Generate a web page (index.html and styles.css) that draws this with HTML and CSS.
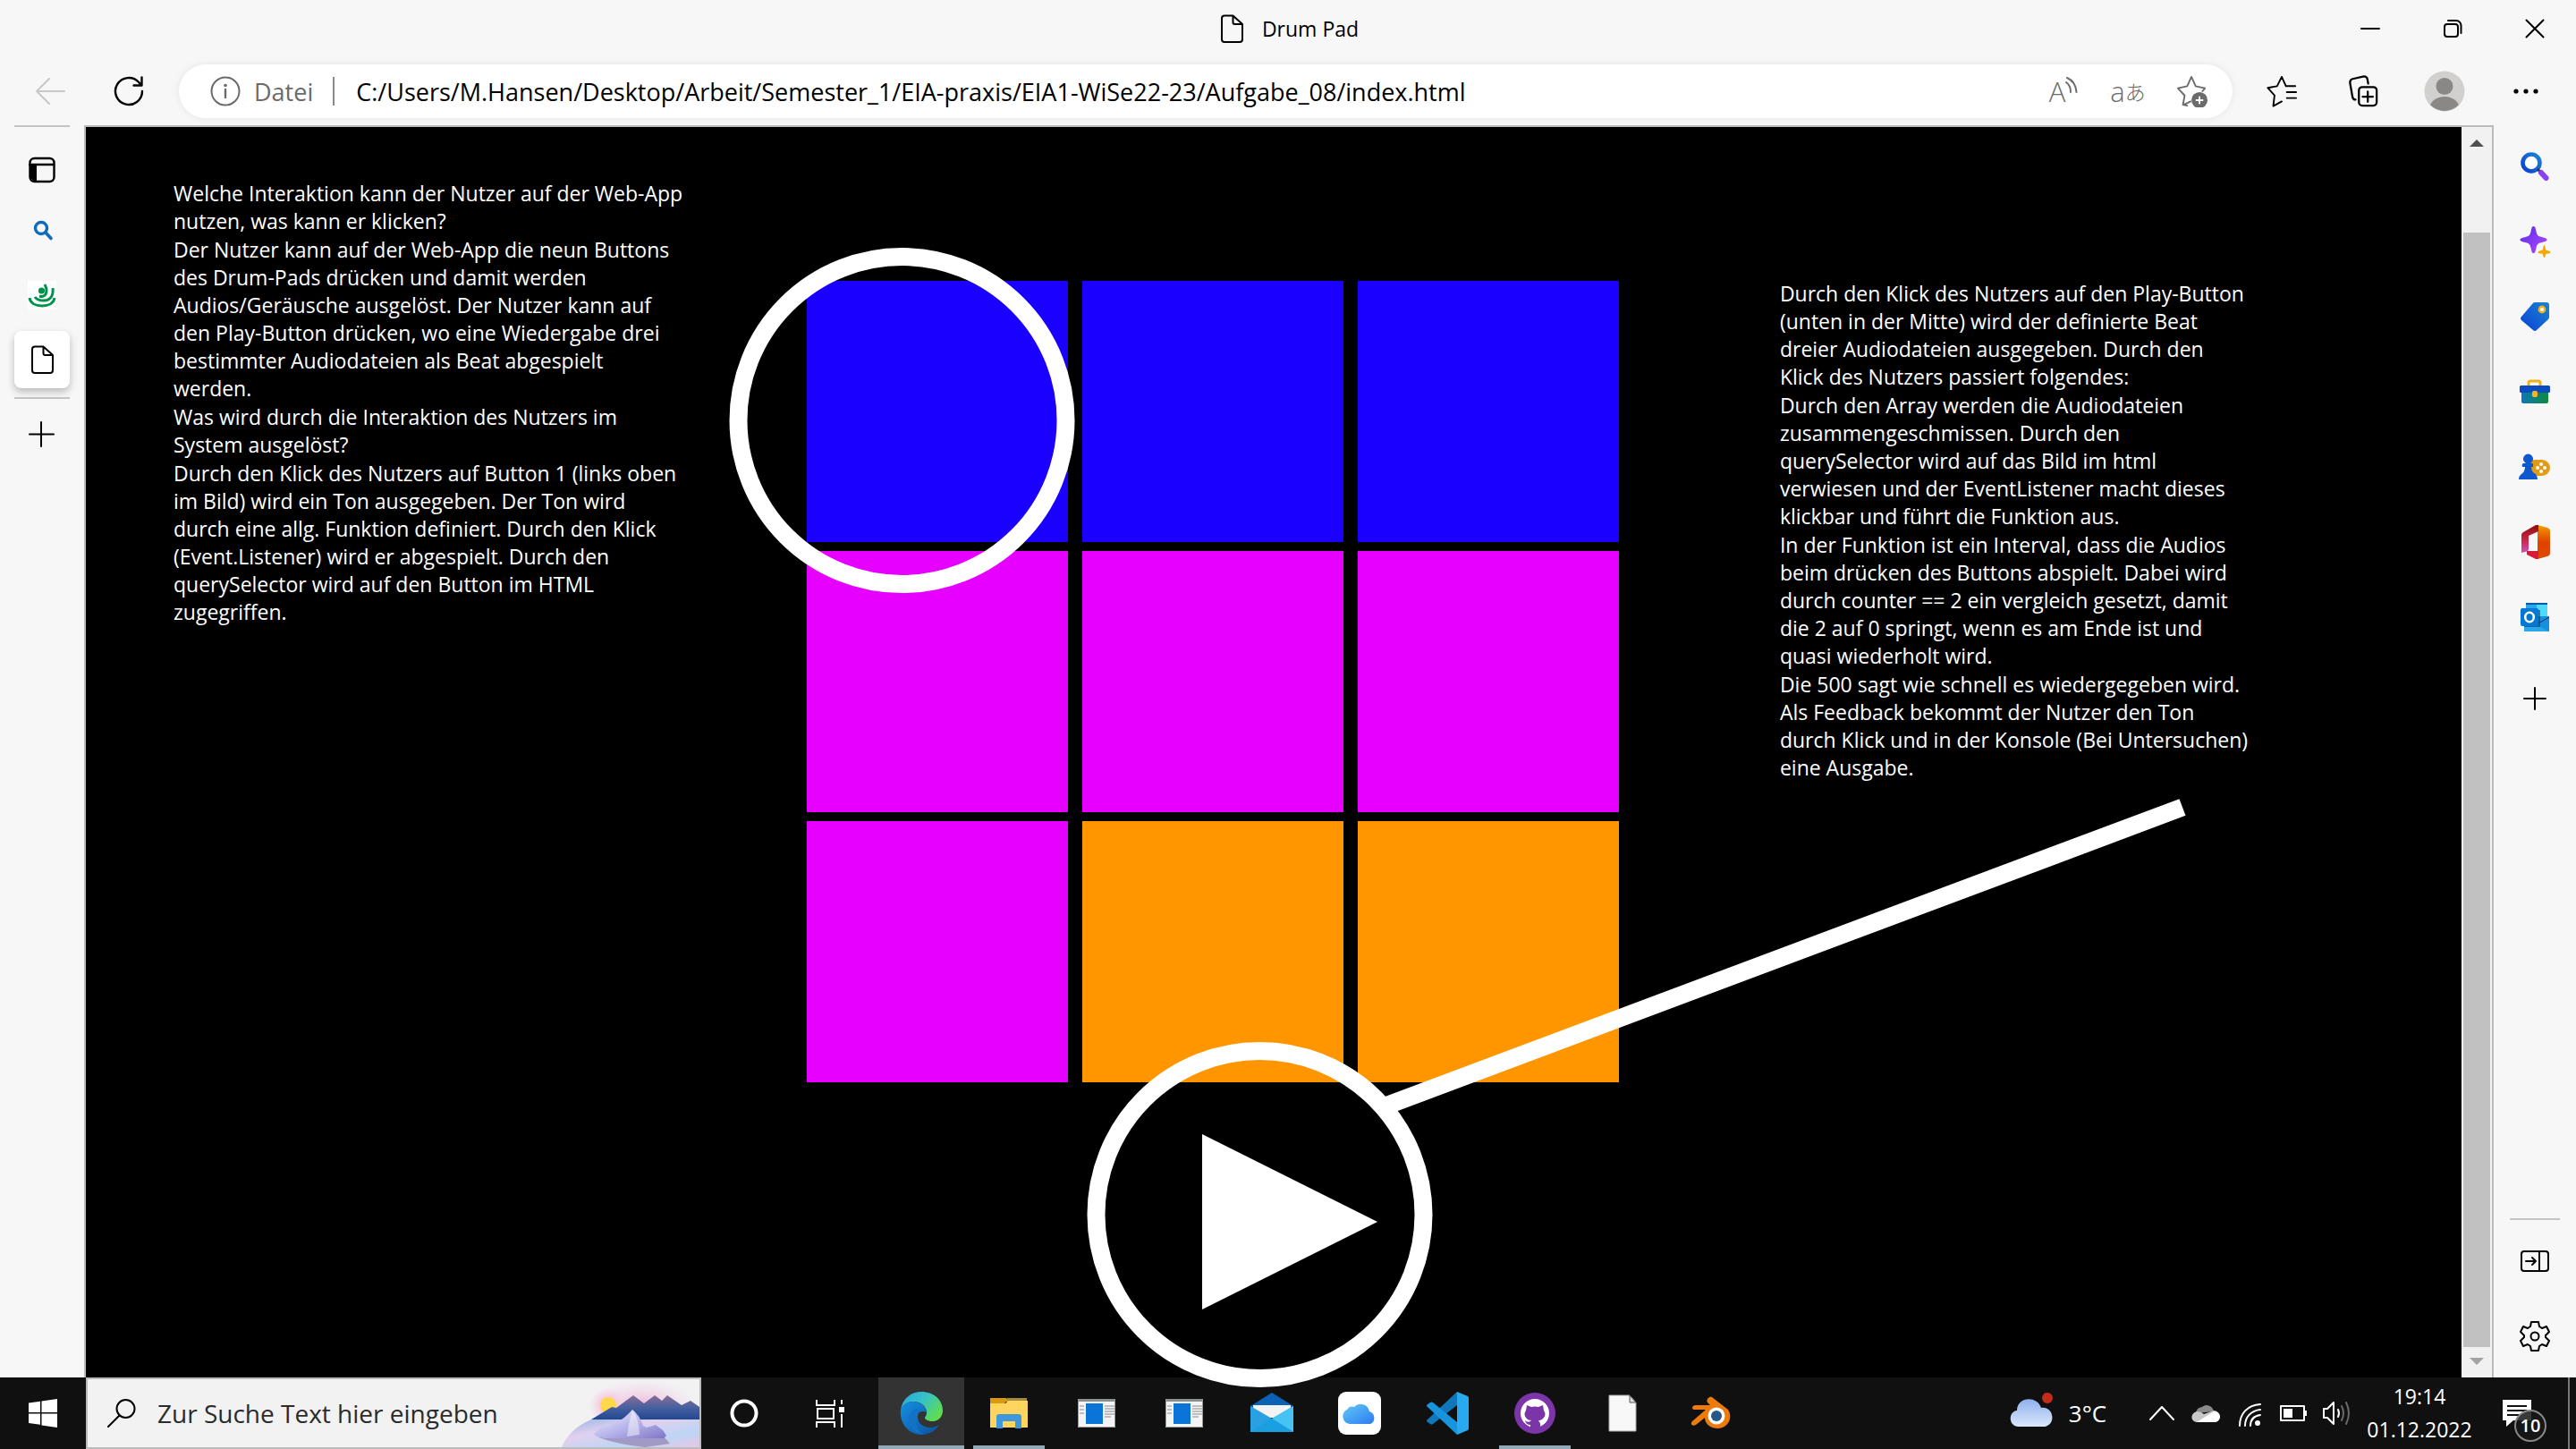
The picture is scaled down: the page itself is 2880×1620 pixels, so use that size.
FILE: index.html
```html
<!DOCTYPE html>
<html lang="de">
<head>
<meta charset="utf-8">
<title>Drum Pad</title>
<link rel="stylesheet" href="styles.css">
</head>
<body>
<header class="titlebar">
  <div class="tab-title">
    <svg class="i32" viewBox="0 0 32 32"><path class="ln" d="M9 1.500h8.500L28 11v17a3 3 0 0 1-3 3H8a3 3 0 0 1-3-3V4.500a3 3 0 0 1 3-3zM17.500 1.500V9a2 2 0 0 0 2 2H28"/></svg>
    <span>Drum Pad</span>
  </div>
  <div class="window-buttons">
    <button aria-label="Minimieren"><svg class="i32" viewBox="0 0 32 32"><path class="ln" d="M6 16h20"/></svg></button>
    <button aria-label="Verkleinern"><svg class="i32" viewBox="0 0 32 32"><rect class="ln" x="7" y="11" width="15" height="14" rx="3"/><path class="ln" d="M11 7h9a5.500 5.500 0 0 1 5.500 5.500V21"/></svg></button>
    <button aria-label="Schließen"><svg class="i32" viewBox="0 0 32 32"><path class="ln" d="M6.500 6.500l19 19M25.500 6.500l-19 19"/></svg></button>
  </div>
</header>

<div class="toolbar">
  <div class="nav-buttons">
    <button aria-label="Zurück" disabled><svg class="i36" viewBox="0 0 36 36"><path class="ln faint" d="M34 18H3M17 4L3 18l14 14"/></svg></button>
    <button aria-label="Aktualisieren"><svg class="i36" viewBox="0 0 36 36"><path class="ln bold" d="M33 18a15 15 0 1 1-4-10.200l3 3.400M32.500 2.500v9h-9"/></svg></button>
  </div>
  <div class="address">
    <svg class="i36" viewBox="0 0 36 36"><circle class="ln gray" cx="18" cy="18" r="15.500"/><path class="ln gray bold" d="M18 16v9"/><circle cx="18" cy="11.500" r="1.800" fill="#6b6b6b"/></svg>
    <label class="scheme" for="url">Datei</label>
    <span class="divider"></span>
    <input id="url" class="url" type="text" value="C:/Users/M.Hansen/Desktop/Arbeit/Semester_1/EIA-praxis/EIA1-WiSe22-23/Aufgabe_08/index.html">
    <div class="address-actions">
      <button class="read" aria-label="Laut vorlesen">A<svg viewBox="0 0 14 24"><path class="ln gray" d="M1 6c3 2 5 6 5 11M2 1c7 3 10 9 10.500 16"/></svg></button>
      <button class="translate" aria-label="Übersetzen">a<span>あ</span></button>
      <button aria-label="Zu Favoriten"><svg class="i36" viewBox="0 0 36 38"><path class="ln gray" d="M12 36l-5-1 2-11-8-8.500L12 13 17 2l5 11 11 2.500-3 3.500M8 35l8-4"/><circle cx="26.500" cy="29.500" r="9.500" fill="#6b6b6b"/><path d="M26.500 25v9M22 29.500h9" stroke="#fff" stroke-width="2"/></svg></button>
    </div>
  </div>
  <div class="tool-actions">
    <button aria-label="Favoriten"><svg class="i36" viewBox="0 0 36 38"><path class="ln" d="M18 31l-10 5.500 1.500-12.500-8-9 11-2L18 2l5 11h11M24 20h11M24 27h11"/></svg></button>
    <button aria-label="Sammlungen"><svg class="i36" viewBox="0 0 36 38"><rect class="ln bold" x="13" y="14" width="21" height="22" rx="4"/><path class="ln bold" d="M23.500 19.500v12M17.500 25.500h12M9 29c-2 0-3-1-3.500-3L2.500 9c0-2 1-4 3-4.500L19 1.500c2 0 3.500 1 4 3L24 10"/></svg></button>
    <button aria-label="Profil"><svg class="i46" viewBox="0 0 46 46"><clipPath id="av"><circle cx="23" cy="23" r="22"/></clipPath><circle cx="23" cy="23" r="22.500" fill="#d2d0ce"/><g clip-path="url(#av)" fill="#8a8886"><circle cx="23" cy="17.500" r="9.500"/><ellipse cx="23" cy="42" rx="16.500" ry="13"/></g></svg></button>
    <button aria-label="Mehr"><svg class="i36" viewBox="0 0 36 36"><g><circle cx="7" cy="18" r="2.600"/><circle cx="18" cy="18" r="2.600"/><circle cx="29" cy="18" r="2.600"/></g></svg></button>
  </div>
</div>

<div class="workspace">
  <nav class="tabs">
    <hr>
    <button class="tab-menu" aria-label="Tabmenü"><svg class="i32" viewBox="0 0 32 32"><rect class="ln bold" x="2.500" y="3" width="27" height="26" rx="5"/><path class="ln bold" d="M2 10h27"/><path d="M3 9h7v19H6l-3-3z"/></svg></button>
    <button aria-label="Suche"><svg class="i32" viewBox="0 0 32 32"><circle cx="15" cy="13" r="6.500" fill="none" stroke="#0f6cbd" stroke-width="3.400"/><path d="M20 18l6 6.500" stroke="#0f6cbd" stroke-width="3.600" stroke-linecap="round"/></svg></button>
    <button aria-label="Hochschule"><svg class="i32" viewBox="0 0 32 32"><path fill="#fff" d="M0 0h32v32H0z"/><circle cx="15.500" cy="11" r="3.600" fill="#00924c"/><g fill="none" stroke="#00924c" stroke-width="3"><path d="M19 4c2 4 3 8 1 11s-4 3-7 2"/><path d="M28 8c1 9-3 14-10 14-5 0-8-1-10-4"/><path d="M2 19c1 6 7 9 14 9s13-3 14-9"/></g></svg></button>
    <button class="active" aria-label="Drum Pad"><svg class="i32" viewBox="0 0 32 32"><path class="ln" d="M8 1.500h9.500L28 11v17a3 3 0 0 1-3 3H8a3 3 0 0 1-3-3V4.500a3 3 0 0 1 3-3zM17.500 1.500V9a2 2 0 0 0 2 2H28"/></svg></button>
    <hr class="low">
    <button aria-label="Neuer Tab"><svg class="i32" viewBox="0 0 32 32"><path class="ln" d="M15 2v27M2 15.500h27"/></svg></button>
  </nav>

  <main class="page">
    <section class="note note-left">
      <p>Welche Interaktion kann der Nutzer auf der Web-App<br>nutzen, was kann er klicken?</p>
      <p>Der Nutzer kann auf der Web-App die neun Buttons<br>des Drum-Pads drücken und damit werden<br>Audios/Geräusche ausgelöst. Der Nutzer kann auf<br>den Play-Button drücken, wo eine Wiedergabe drei<br>bestimmter Audiodateien als Beat abgespielt<br>werden.</p>
      <p>Was wird durch die Interaktion des Nutzers im<br>System ausgelöst?</p>
      <p>Durch den Klick des Nutzers auf Button 1 (links oben<br>im Bild) wird ein Ton ausgegeben. Der Ton wird<br>durch eine allg. Funktion definiert. Durch den Klick<br>(Event.Listener) wird er abgespielt. Durch den<br>querySelector wird auf den Button im HTML<br>zugegriffen.</p>
    </section>
    <section class="drum">
      <div class="pads">
        <button class="pad blue" aria-label="Pad 1"></button><button class="pad blue" aria-label="Pad 2"></button><button class="pad blue" aria-label="Pad 3"></button>
        <button class="pad pink" aria-label="Pad 4"></button><button class="pad pink" aria-label="Pad 5"></button><button class="pad pink" aria-label="Pad 6"></button>
        <button class="pad pink" aria-label="Pad 7"></button><button class="pad orange" aria-label="Pad 8"></button><button class="pad orange" aria-label="Pad 9"></button>
      </div>
      <button class="play" aria-label="Play"><svg viewBox="0 0 196 196"><path d="M0 0l196 98L0 196z" fill="#fff"/></svg></button>
      <svg class="marks" viewBox="0 0 908 1240"><circle cx="106.500" cy="156" r="183"/><circle cx="506.500" cy="1044" r="183"/><path d="M646 922.800L1538 588.500"/></svg>
    </section>
    <section class="note note-right">
      <p>Durch den Klick des Nutzers auf den Play-Button<br>(unten in der Mitte) wird der definierte Beat<br>dreier Audiodateien ausgegeben. Durch den<br>Klick des Nutzers passiert folgendes:</p>
      <p>Durch den Array werden die Audiodateien<br>zusammengeschmissen. Durch den<br>querySelector wird auf das Bild im html<br>verwiesen und der EventListener macht dieses<br>klickbar und führt die Funktion aus.</p>
      <p>In der Funktion ist ein Interval, dass die Audios<br>beim drücken des Buttons abspielt. Dabei wird<br>durch counter == 2 ein vergleich gesetzt, damit<br>die 2 auf 0 springt, wenn es am Ende ist und<br>quasi wiederholt wird.</p>
      <p>Die 500 sagt wie schnell es wiedergegeben wird.<br>Als Feedback bekommt der Nutzer den Ton<br>durch Klick und in der Konsole (Bei Untersuchen)<br>eine Ausgabe.</p>
    </section>
  </main>

  <div class="scrollbar">
    <svg viewBox="0 0 34 34"><path d="M9 22h16l-8-8z" fill="#505050"/></svg>
    <div class="thumb"></div>
    <svg viewBox="0 0 34 34"><path d="M9 12h16l-8 8z" fill="#a3a3a3"/></svg>
  </div>

  <aside class="sidebar">
    <svg width="0" height="0" class="defs"><defs>
      <linearGradient id="gBlue" x1="0" y1="1" x2="1" y2="0"><stop offset="0" stop-color="#0a3fd6"/><stop offset="1" stop-color="#1a86d0"/></linearGradient>
      <linearGradient id="gPurple" x1="0" y1="0" x2="1" y2="1"><stop offset="0" stop-color="#5a2be8"/><stop offset="1" stop-color="#b04bff"/></linearGradient>
      <linearGradient id="gGreen" x1="0" y1="0" x2="1" y2="0"><stop offset="0" stop-color="#0b78b8"/><stop offset="1" stop-color="#0f8a3c"/></linearGradient>
      <linearGradient id="gOff" x1="0" y1="0" x2="0" y2="1"><stop offset="0" stop-color="#f59a00"/><stop offset=".5" stop-color="#de4300"/><stop offset="1" stop-color="#e04a00"/></linearGradient>
      <linearGradient id="gOff2" x1="0" y1="0" x2="0" y2="1"><stop offset="0" stop-color="#8a1010"/><stop offset=".5" stop-color="#cc2040"/><stop offset="1" stop-color="#d050b8"/></linearGradient>
    </defs></svg>
    <button aria-label="Suchen"><svg class="i36" viewBox="0 0 36 36"><circle cx="14" cy="14" r="9.500" fill="#fff" stroke="url(#gBlue)" stroke-width="4.600"/><path d="M21 21l3 3" stroke="#333" stroke-width="3"/><path d="M25 25l5.500 6" stroke="#8a3ff0" stroke-width="6" stroke-linecap="round"/></svg></button>
    <button aria-label="Entdecken"><svg class="i36" viewBox="0 0 36 36"><path d="M16.500 1c1.500 0 2 1 3 6 1 4 2 5 6 6 5 1 6 2 6 3s-1 2-6 3c-4 1-5 2-6 6-1 5-1.500 6-3 6s-2-1-3-6c-1-4-2-5-6-6-5-1-6-2-6-3s1-2 6-3c4-1 5-2 6-6 1-5 1.500-6 3-6z" fill="url(#gPurple)"/><path d="M28.500 22c1 0 1.500 5 2 5.500s5 1 5 2.500-4.500 1.500-5 2-1 4-2 4-1.500-3.500-2-4-5-.5-5-2 4.500-2 5-2.500 1-5.500 2-5.500z" fill="#f2a900"/></svg></button>
    <button aria-label="Shopping"><svg class="i36" viewBox="0 0 36 36"><path d="M18 2h13q3 0 3 3v13q0 2-1 3L20 33q-2 2-4 0L3 22q-2-2 0-4L15 4q1-2 3-2z" fill="url(#gBlue)"/><circle cx="26" cy="10" r="3.200" fill="#fff" stroke="#f2b01e" stroke-width="2.400"/></svg></button>
    <button aria-label="Tools"><svg class="i36" viewBox="0 0 36 36"><path d="M11 11V8q0-2 2-2h9q2 0 2 2v3" fill="none" stroke="#f0ae1c" stroke-width="3"/><path d="M3 16h30v13q0 2-2 2H5q-2 0-2-2z" fill="url(#gGreen)"/><rect x="1" y="11" width="34" height="8" rx="1.500" fill="#0c4ac4"/><rect x="15" y="17" width="6" height="7" rx="2" fill="#f6b51e"/></svg></button>
    <button aria-label="Spiele"><svg class="i36" viewBox="0 0 36 36"><rect x="9" y="10" width="26" height="18" rx="9" fill="#e59a14"/><g fill="#fff"><circle cx="25" cy="15" r="2"/><circle cx="25" cy="23" r="2"/><circle cx="21" cy="19" r="2"/><circle cx="29" cy="19" r="2"/></g><path d="M5 14h3a5.500 5.500 0 1 1 5 0h3v4h-2q0 6 5 8 2 3 2 6H0q0-4 3-6 4-3 4-8H4q-1-3 1-4z" fill="#0d58cf"/></svg></button>
    <button aria-label="Office"><svg class="i40" viewBox="0 0 36 40"><path d="M21 1l11 3q3 1 3 4v24q0 3-3 4l-11 3z" fill="url(#gOff)"/><path d="M22 1v7L11 13v15q0 2-4 3l-4 1V12q0-2 2-3L19 1z" fill="url(#gOff2)"/><path d="M9 30h13v9h-3L9 34z" fill="#d81b3a"/></svg></button>
    <button aria-label="Outlook"><svg class="i36" viewBox="0 0 36 36"><path d="M8 2h24v16H8z" fill="#28a8ea"/><path d="M20 2h12v16H20z" fill="#50d9ff"/><path d="M8 2h24v2H8z" fill="#0358a7"/><path d="M6 17h28v17H6z" fill="#1490df"/><path d="M6 20l28 14H6z" fill="#28a8ea"/><path d="M20 26l14-8" stroke="#0a2767"/><path d="M6 10h18v19H6z" fill="#123b6d" opacity=".6"/><rect x="2" y="8" width="20" height="20" rx="2" fill="#0078d4"/><ellipse cx="12" cy="18" rx="4.800" ry="5.200" fill="none" stroke="#fff" stroke-width="2.600"/></svg></button>
    <button aria-label="Hinzufügen"><svg class="i32" viewBox="0 0 32 32"><path class="ln" d="M16 4v24M4 16h24"/></svg></button>
    <div class="spacer"></div>
    <hr>
    <button aria-label="Ausblenden"><svg class="i36" viewBox="0 0 36 36"><rect class="ln" x="3" y="7" width="30" height="22" rx="3"/><path class="ln" d="M23 7v22M8 18h11M15 14l4 4-4 4"/></svg></button>
    <button aria-label="Einstellungen"><svg class="i36" viewBox="0 0 36 36"><path class="ln" d="M14 2h8l1 5 3 2 5-2 3 6-4 4v2l4 4-3 6-5-2-3 2-1 5h-8l-1-5-3-2-5 2-3-6 4-4v-2l-4-4 3-6 5 2 3-2z"/><circle class="ln" cx="18" cy="18" r="4.500"/></svg></button>
  </aside>
</div>

<footer class="taskbar">
  <button class="start" aria-label="Start"><svg class="i32" viewBox="0 0 32 32"><path fill="#fff" d="M0 4.500L13 2.700V15H0zM14.500 2.500L32 0v15H14.500zM0 16.500h13v12.300L0 27zM14.500 16.500H32V32l-17.500-2.500z"/></svg></button>
  <div class="search">
    <svg class="i32" viewBox="0 0 32 32"><circle class="ln" cx="20.500" cy="11" r="10"/><path class="ln" d="M13.500 18.500L1 31"/></svg>
    <input type="text" aria-label="Suche" placeholder="Zur Suche Text hier eingeben">
    <svg class="art" viewBox="0 0 154 76">
      <defs>
        <radialGradient id="glow"><stop offset="0" stop-color="#ffb347"/><stop offset=".5" stop-color="#f8c8dc" stop-opacity=".8"/><stop offset="1" stop-color="#f2d3ec" stop-opacity="0"/></radialGradient>
        <radialGradient id="haze"><stop offset="0" stop-color="#eeb4d8"/><stop offset="1" stop-color="#f2d3ec" stop-opacity="0"/></radialGradient>
        <linearGradient id="mt" x1="0" y1="0" x2="0" y2="1"><stop offset="0" stop-color="#8a6d94"/><stop offset=".5" stop-color="#4660a0"/><stop offset="1" stop-color="#1f4590"/></linearGradient>
        <linearGradient id="sea" x1="0" y1="0" x2="1" y2="1"><stop offset="0" stop-color="#8fb6e6"/><stop offset=".35" stop-color="#e2d0ee"/><stop offset=".7" stop-color="#bcd6f4"/><stop offset="1" stop-color="#e9c6e8"/></linearGradient>
        <linearGradient id="ice" x1="0" y1="0" x2="1" y2="1"><stop offset="0" stop-color="#f4f0ff"/><stop offset=".5" stop-color="#b9b8ec"/><stop offset="1" stop-color="#7f74c8"/></linearGradient>
      </defs>
      <ellipse cx="90" cy="30" rx="62" ry="30" fill="url(#haze)"/><circle cx="52" cy="29" r="20" fill="url(#glow)"/><circle cx="52" cy="29" r="9" fill="#ffd84a"/>
      <path d="M33 45L56 31l5 1 19-14 12 9 12-9 8 6 6-6 16 11 10-5 10 7v15z" fill="url(#mt)"/>
      <path d="M33 45h121v31H0q8-20 33-31z" fill="url(#sea)"/>
      <path d="M41 65l74 0 6 7-28 4q-30-3-52-11z" fill="#9585b8" opacity=".75"/>
      <path d="M36 61l6-6 12-3 8-4q8-4 17-14 8 6 12 18l4 2 10-3 8 6 4 6-3 3H48q-10-1-12-5z" fill="url(#ice)"/>
      <path d="M79 34q-4 14-6 30l14-2q0-16-8-28z" fill="#fff" opacity=".45"/>
    </svg>
  </div>
  <div class="apps">
    <button class="app" aria-label="Cortana"><svg class="i32" viewBox="0 0 32 32"><circle cx="16" cy="16" r="13.500" fill="none" stroke="#fff" stroke-width="4"/></svg></button>
    <button class="app" aria-label="Aktive Anwendungen"><svg class="i32" viewBox="0 0 32 32"><g fill="none" stroke="#fff" stroke-width="2"><path d="M1 1v6h20V1M2 11h18v11H2zM1 32v-6h20v6M29 1v5M29 17v15"/></g><path d="M26 9h6v6h-6z" fill="#fff"/></svg></button>
  </div>
  <div class="apps pinned">
    <button class="app current" aria-label="Edge"><svg class="i48" viewBox="0 0 48 48"><defs><linearGradient id="e1" x1="0" y1="0" x2="1" y2=".6"><stop offset="0" stop-color="#2aa5dd"/><stop offset=".5" stop-color="#35c1c8"/><stop offset="1" stop-color="#5fdc52"/></linearGradient><linearGradient id="e2" x1="0" y1="0" x2="1" y2="1"><stop offset="0" stop-color="#1490df"/><stop offset="1" stop-color="#0c4fa0"/></linearGradient></defs><path d="M1 20C3 8 12 0 24 0c14 0 24 9 24 21 0 7-5 12-11 12-5 0-9-2-9-4 0-1 2-2 2-6 0-7-7-12-14-12C8 11 3 15 1 20z" fill="url(#e1)"/><path d="M1 20c2-6 8-9 14-9 8 0 14 5 15 11-4-3-10-1-10 6 0 8 7 12 14 12 4 0 7-2 10-3-4 7-12 11-20 11C11 48-1 36 1 20z" fill="url(#e2)"/><path d="M20 25c-4 9-1 19 7 23C15 46 9 38 10 28c1-5 5-9 10-9 5 0 8 1 10 4-4-2-8-1-10 2z" fill="#1272c6"/></svg></button>
    <button class="app open" aria-label="Explorer"><svg class="i42" viewBox="0 0 42 42"><path d="M0 4h18l3 4h-3l-3 3H0z" fill="#d99a10"/><path d="M0 10h17l3-3h22v30H0z" fill="#ffd55e"/><path d="M19 4h22v3H19z" fill="#a88b3c"/><path d="M7 38V25q0-3 3-3h22q3 0 3 3v13h-7v-8H14v8z" fill="#3f97dc"/></svg></button>
    <button class="app" aria-label="Programm"><svg class="i42" viewBox="0 0 42 32"><path fill="#f4f4f4" d="M0 0h42v32H0z"/><path d="M0 0h42v3H0z" fill="#8d9091"/><path d="M9 5h19v23H9z" fill="#0a74d8"/><path d="M30 8h11M30 11h11M30 14h11M30 17h11M30 20h7M2 8h5M2 12h5M2 16h5" stroke="#888"/><path d="M.5 0v31.500h41V0" fill="none" stroke="#999"/></svg></button>
    <button class="app" aria-label="Programm"><svg class="i42" viewBox="0 0 42 32"><path fill="#f4f4f4" d="M0 0h42v32H0z"/><path d="M0 0h42v3H0z" fill="#8d9091"/><path d="M9 5h19v23H9z" fill="#0a74d8"/><path d="M30 8h11M30 11h11M30 14h11M30 17h11M30 20h7M2 8h5M2 12h5M2 16h5" stroke="#888"/><path d="M.5 0v31.500h41V0" fill="none" stroke="#999"/></svg></button>
    <button class="app" aria-label="Mail"><svg class="i48" viewBox="0 0 48 48"><path d="M0 16L24 1l24 15v8H0z" fill="#0b62b5"/><path d="M3 15h42v14H3z" fill="#f3f3f3"/><path d="M0 16l24 14 24-14v29H0z" fill="#2a9fe2"/><path d="M24 30l24-14v29z" fill="#46c3f2"/><path d="M0 45l24-15 24 15z" fill="#1aa0e0"/></svg></button>
    <button class="app" aria-label="iCloud"><svg class="i48" viewBox="0 0 48 48"><defs><linearGradient id="ic" x1="0" y1="0" x2="1" y2="1"><stop offset="0" stop-color="#65c8f8"/><stop offset="1" stop-color="#2b7bf0"/></linearGradient></defs><rect width="48" height="48" rx="9" fill="#fff"/><path d="M13 36a8.500 8.500 0 0 1-3-16 7 7 0 0 1 8-3 10 10 0 0 1 17 5 7.500 7.500 0 0 1 1 14z" fill="url(#ic)"/></svg></button>
    <button class="app" aria-label="Visual Studio Code"><svg class="i48" viewBox="0 0 48 48"><path d="M35 0L2 31q-2 1 0 3l3 2q2 1 3 0l27-21z" fill="#1177bb"/><path d="M35 48L2 17q-2-1 0-3l3-2q2-1 3 0l27 22z" fill="#1794dd"/><path d="M35 0l12 5q1 1 1 2v34q0 1-1 2l-12 5z" fill="#29a9f0"/></svg></button>
    <button class="app open" aria-label="GitHub Desktop"><svg class="i46" viewBox="0 0 46 46"><circle cx="23" cy="23" r="23" fill="#7b35a8"/><circle cx="23" cy="23" r="16" fill="#fff"/><path d="M14 14l5 2q4-1 8 0l5-2 1 6q3 4 0 8-2 3-6 3.500 2 2 2 4V40H18v-4q-5 0-6-5 3 3 6 1l1-1q-4 0-6-3-3-4 0-8z" fill="#7b35a8"/></svg></button>
    <button class="app" aria-label="Datei"><svg class="i42" viewBox="0 0 32 42"><path d="M1 1h23l7 8v32H1z" fill="#f8f8f8" stroke="#aaa"/><path d="M24 1v8h7z" fill="#ddd" stroke="#555"/></svg></button>
    <button class="app" aria-label="Blender"><svg class="i46" viewBox="0 0 46 46"><path d="M25 5l18 14c5 7 2 20-11 21-10 0-15-6-15-12L7 36c-4 2-7-1-4-4l15-13H6c-4 0-4-4 0-5h17l-3-3c-2-3 2-7 5-6z" fill="#ea7b0c"/><circle cx="30" cy="26" r="9.500" fill="#fff"/><circle cx="30" cy="26" r="6" fill="#265787"/></svg></button>
  </div>
  <div class="tray">
    <button class="weather"><svg viewBox="0 0 50 40"><defs><linearGradient id="wc" x1="0" y1="0" x2="0" y2="1"><stop offset="0" stop-color="#8fb0ee"/><stop offset="1" stop-color="#dbe8fb"/></linearGradient></defs><path d="M10 38C-2 38-2 21 8 20 8 4 31 3 35 17c15-2 17 20 3 21z" fill="url(#wc)"/><circle cx="42" cy="6" r="6" fill="#c42b1c"/></svg>3°C</button>
    <button aria-label="Ausgeblendete Symbole"><svg class="i32" viewBox="0 0 32 32"><path class="ln white" d="M3 23L16 9l13 14"/></svg></button>
    <button aria-label="OneDrive"><svg class="i32" viewBox="0 0 32 32"><path d="M5 16a8 8 0 0 1 7-7 8 8 0 0 1 13 5z" fill="#8a8a8a"/><path d="M6 26C-2 25-1 15 7 14q4 0 7 3l11-4c9 1 9 12 1 13z" fill="#c8c8c8"/><path d="M6 26l19-12c9 0 9 11 1 12z" fill="#fff"/></svg></button>
    <button aria-label="Netzwerk"><svg class="i32" viewBox="0 0 32 32"><g class="ln white"><path d="M5 30C5 16 14 7 28 6M11 30c0-10 7-17 17-18M17 30c0-7 4-11 11-12"/></g><circle cx="25" cy="27" r="3" fill="#fff"/></svg></button>
    <button aria-label="Akku"><svg class="i32" viewBox="0 0 32 32"><path class="ln white" d="M2 8h26v16H2z"/><path d="M5 11h10v10H5zM28 13h3v6h-3z" fill="#fff"/></svg></button>
    <button aria-label="Lautstärke"><svg class="i36" viewBox="0 0 36 36"><path class="ln white" d="M3 13h4l7-7v24l-7-7H3zM19 14q2 4 0 8"/><path class="ln white dim" d="M23 10q4 8 0 16M28 6q6 12 0 24"/></svg></button>
    <div class="clock"><time>19:14</time><time>01.12.2022</time></div>
    <button class="notify" aria-label="Benachrichtigungen"><svg viewBox="0 0 34 34"><path d="M1 2h32v23H13l-8 7v-7H1z" fill="#fff"/><path d="M6 9h22M6 14h22M6 19h16" stroke="#101010" stroke-width="2"/></svg><span class="badge">10</span></button>
  </div>
</footer>
</body>
</html>
```
FILE: styles.css
```css
* { box-sizing: border-box; }

body {
  margin: 0;
  min-height: 100vh;
  display: flex;
  flex-direction: column;
  background: #f7f7f7;
  color: #000;
  font-family: "Open Sans", "Noto Sans", "Noto Sans CJK JP", sans-serif;
  font-size: 23px;
}

button, input {
  font: inherit;
  color: inherit;
  border: 0;
  padding: 0;
  margin: 0;
  background: none;
  outline: 0;
}

button { display: flex; align-items: center; justify-content: center; }
svg { display: block; flex: none; }
p { margin: 0; }
hr { margin: 0; border: 0; height: 2px; background: #c4c4c4; flex: none; }

.i32 { width: 32px; height: 32px; }
.i36 { width: 36px; height: 36px; }
.i40 { width: 40px; height: 40px; }
.i42 { width: 42px; height: 42px; }
.i46 { width: 46px; height: 46px; }
.i48 { width: 48px; height: 48px; }

.ln { fill: none; stroke: #000; stroke-width: 2; stroke-linecap: round; stroke-linejoin: round; }
.ln.bold { stroke-width: 2.4; }
.ln.gray { stroke: #6b6b6b; }
.ln.faint { stroke: #c8c8c8; }
.ln.white { stroke: #fff; }
.ln.dim { stroke: #6a6a6a; }

/* Window title */
.titlebar { display: grid; grid-template-columns: 1fr auto 1fr; height: 64px; }
.tab-title { grid-column: 2; display: flex; align-items: center; gap: 18px; }
.window-buttons { display: flex; justify-content: flex-end; }
.window-buttons button { width: 92px; height: 64px; }

/* Address row */
.toolbar { display: flex; align-items: center; height: 76px; }
.nav-buttons { display: flex; padding: 0 12px; }
.nav-buttons button { width: 88px; height: 60px; }
.address {
  flex: 1;
  min-width: 0;
  display: flex;
  align-items: center;
  height: 60px;
  padding: 0 9px 0 34px;
  border-radius: 30px;
  background: #fff;
  box-shadow: 0 0 8px rgba(0, 0, 0, .08);
  font-size: 27px;
}
.scheme { margin-left: 14px; color: #6b6b6b; }
.divider { width: 2px; height: 32px; margin: 0 24px 0 22px; background: #8a8a8a; }
.url { flex: 1; min-width: 0; height: 60px; }
.address-actions { display: flex; color: #6b6b6b; }
.address-actions button { width: 72px; height: 60px; }
.read { font-size: 31px; font-weight: 300; }
.read svg { width: 14px; height: 24px; align-self: flex-start; margin-top: 14px; }
.translate { font-size: 31px; font-weight: 300; }
.translate span { font-size: 23px; font-family: "Noto Sans CJK JP", sans-serif; }
.tool-actions { display: flex; padding: 0 11px 0 9px; }
.tool-actions button { width: 91px; height: 60px; }

/* Tabs | page | scrollbar | sidebar */
.workspace { flex: 1; display: flex; min-height: 0; }
.tabs { width: 94px; display: flex; flex-direction: column; gap: 8px; padding: 0 16px; }
.tabs button { width: 62px; height: 64px; flex: none; }
.tabs .tab-menu { margin: 8px 0 -4px; }
.tabs .active { background: #fff; border-radius: 8px; box-shadow: 0 4px 8px rgba(0, 0, 0, .25); }
.tabs .low { margin-top: 2px; }

.page {
  flex: 1;
  min-width: 0;
  display: grid;
  grid-template-columns: 757fr 908px 893fr;
  column-gap: 48px;
  align-items: start;
  border-left: 2px solid #bbb;
  border-top: 2px solid #bbb;
  background: #000;
  color: #fff;
}
.note { display: grid; gap: 1px; font-size: 23px; line-height: 31px; white-space: nowrap; }
.note-left { padding: 59px 0 0 98px; }
.note-right { padding: 171px 0 0 132px; }

.drum { position: relative; padding-top: 172px; }
.pads { display: grid; grid-template-columns: repeat(3, 1fr); gap: 10px 16px; }
.pad { height: 292px; }
.blue { background: #1900ff; }
.pink { background: #e600ff; }
.orange { background: #ff9600; }
.play { margin: 58px 0 0 442px; }
.play svg { width: 196px; height: 196px; }
.marks {
  position: absolute;
  left: 0;
  top: 172px;
  z-index: 1;
  width: 908px;
  height: 1240px;
  overflow: visible;
  pointer-events: none;
  fill: none;
  stroke: #fff;
  stroke-width: 20;
}

.scrollbar {
  width: 36px;
  display: flex;
  flex-direction: column;
  border-top: 2px solid #bbb;
  border-right: 2px solid #bbb;
  background: #f1f1f1;
}
.scrollbar svg { width: 34px; height: 34px; }
.thumb { flex: 1; margin: 84px 2px 0; background: #c1c1c1; }

.sidebar { width: 92px; display: flex; flex-direction: column; align-items: center; padding: 4px 0; }
.defs { position: absolute; }
.sidebar button { width: 92px; height: 84px; flex: none; }
.sidebar button:nth-of-type(8) { margin-top: 7px; }
.sidebar hr { width: 56px; margin-bottom: 4px; }
.spacer { flex: 1; }

/* Taskbar */
.taskbar { display: flex; height: 80px; background: #101010; color: #fff; }
.start { width: 96px; }
.search {
  width: 688px;
  display: flex;
  align-items: center;
  gap: 24px;
  padding-left: 22px;
  border: 2px solid #bbb;
  background: #f2f2f2;
  color: #2b2b2b;
}
.search input { flex: 1; min-width: 0; font-size: 28px; }
.search input::placeholder { color: #2b2b2b; opacity: 1; }
.search .art { width: 154px; height: 76px; margin-left: -24px; }
.apps { display: flex; }
.pinned { margin-left: 6px; gap: 2px; }
.app { width: 96px; height: 80px; }
.current { background: #333; box-shadow: inset 0 -4px #93a9b5; }
.open { background: linear-gradient(#93a9b5, #93a9b5) center bottom / 80px 4px no-repeat; }

.tray { flex: 1; display: flex; justify-content: flex-end; padding-right: 7px; }
.tray button { width: 49px; height: 80px; }
.tray .weather { width: 110px; gap: 16px; margin-right: 36px; font-size: 26px; }
.weather svg { width: 50px; height: 40px; margin-bottom: 6px; }
.clock {
  width: 136px;
  margin-right: 12px;
  display: flex;
  flex-direction: column;
  align-items: center;
  justify-content: center;
  line-height: 37px;
}
.tray .notify {
  position: relative;
  width: 88px;
  justify-content: flex-start;
  padding-left: 12px;
  border-right: 2px solid #777;
}
.notify svg { width: 34px; height: 34px; }
.badge {
  position: absolute;
  left: 26px;
  top: 36px;
  width: 36px;
  height: 36px;
  border: 2px solid #888;
  border-radius: 50%;
  background: rgba(24, 24, 24, .85);
  font-size: 20px;
  font-weight: 600;
  line-height: 32px;
  text-align: center;
}
```
